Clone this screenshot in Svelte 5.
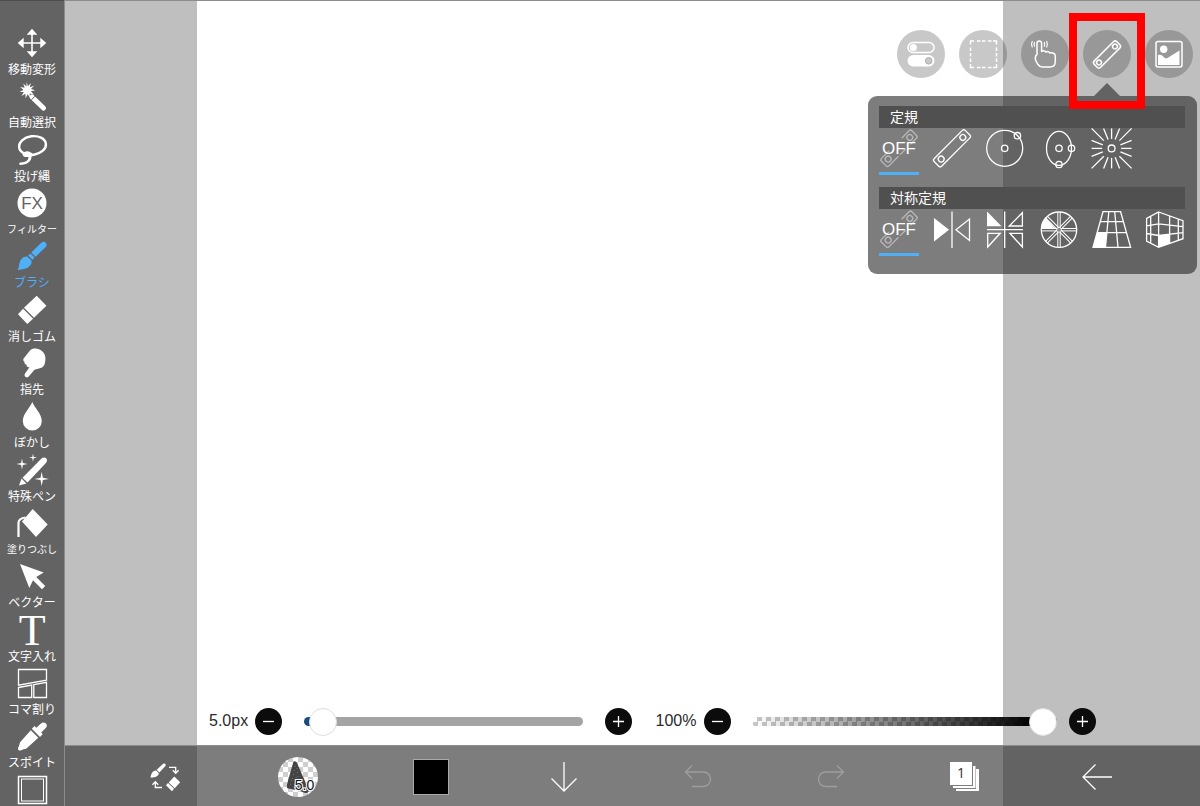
<script>
  const tools = [
    { id: 'move', label: '移動変形' },
    { id: 'wand', label: '自動選択' },
    { id: 'lasso', label: '投げ縄' },
    { id: 'filter', label: 'フィルター' },
    { id: 'brush', label: 'ブラシ' },
    { id: 'eraser', label: '消しゴム' },
    { id: 'smudge', label: '指先' },
    { id: 'blur', label: 'ぼかし' },
    { id: 'special', label: '特殊ペン' },
    { id: 'fill', label: '塗りつぶし' },
    { id: 'vector', label: 'ベクター' },
    { id: 'text', label: '文字入れ' },
    { id: 'frame', label: 'コマ割り' },
    { id: 'dropper', label: 'スポイト' },
    { id: 'canvas', label: '' }
  ];

  const sections = [
    { title: '定規', items: ['off', 'ruler', 'circle', 'ellipse', 'radial'] },
    { title: '対称定規', items: ['off', 'mirror', 'quad', 'wheel', 'grid', 'cube'] }
  ];

  const topButtons = ['toggles', 'select', 'touch', 'ruler', 'image'];
  const bottomButtons = ['swap', 'preview', 'color', 'down', 'undo', 'redo', 'layers', 'back'];

  const ringPoints = [
    [0, -20], [8, -20], [20, -20], [20, -8], [20, 0], [20, 8], [20, 20], [8, 20],
    [0, 20], [-8, 20], [-20, 20], [-20, 8], [-20, 0], [-20, -8], [-20, -20], [-8, -20]
  ];
  const rays = ringPoints.map(([x, y]) => {
    const k = (x && Math.abs(x) === Math.abs(y) ? 11 : 9.5) / Math.hypot(x, y);
    return { x1: 19.6 + x * k, y1: 20.4 + y * k, x2: 19.6 + x, y2: 20.4 + y };
  });

  let tool = $state('brush');
  let picked = $state(['off', 'off']);
  let size = $state(2);
  let opacity = $state(100);
</script>

<div class="app">
  <div class="backdrop"><div class="paper"></div></div>

  <nav class="sidebar">
    {#each tools as t}
      <button class="tool" class:active={tool === t.id} aria-label={t.label || t.id} onclick={() => (tool = t.id)}>
        <svg viewBox="0 0 32 32" width="32" height="32" fill="currentColor">
          {#if t.id === 'move'}
            <path d="M16 1.700l5.300 6h-4.500v7.500h7.500v-4.500L30.300 16l-6 5.300v-4.500h-7.500v7.500h4.500L16 30.300l-5.300-6h4.500v-7.500H7.700v4.500L1.700 16l6-5.300v4.500h7.500V7.700h-4.500z" />
          {:else if t.id === 'wand'}
            <path d="M10.700 2l1.200 4.300 2.900-3.300-1 4.300 4.200-1.500-3 3.200 4.200 1.300-4.300.900 2.900 3.400-4.200-1.200.700 4.400-2.700-3.500-2 4-.2-4.500-3.900 2.100 2.300-3.800-4.400-.4 4.100-1.700-3.300-3 4.400.7-1.300-4.200 3.100 3z" />
            <path d="M16 17l11.500 11" stroke="currentColor" stroke-width="5" stroke-linecap="round" />
            <path d="M19 16.200l-3.500 3.500" stroke="#636363" stroke-width="1" />
          {:else if t.id === 'lasso'}
            <ellipse cx="16.500" cy="11.500" rx="13.500" ry="9.300" transform="rotate(-8 16.500 11.500)" fill="none" stroke="currentColor" stroke-width="2.400" />
            <path d="M6.500 20c1-2.500 5-3.400 7.500-2 2.500 1.500 3.500 2.600 5 4-2 0-3.300.2-4.500 1.500-1.500 0-2.500-.5-4-.5-2 0-4-.5-4-3z" />
            <path d="M13.500 20.500c2 4-1 9-9 9.200" fill="none" stroke="currentColor" stroke-width="2.600" stroke-linecap="round" />
          {:else if t.id === 'filter'}
            <circle cx="16" cy="16" r="14.500" />
            <text x="16" y="22" text-anchor="middle" class="fx">FX</text>
          {:else if t.id === 'brush'}
            <path d="M29.600 2.500c1.600 1.600 1.200 3.500-.3 5L19.500 16.700l-4.200-4.200 9.400-9.200c1.500-1.500 3.500-2.200 4.900-.8z" />
            <path d="M14.400 13.400l4.200 4.200-2.200 2.200-4.200-4.200zM11.300 16.500l4.200 4.200c.6 3-1.200 6-4.500 7.300-3 1.100-6 1.500-9.500 2 1.200-1.800 1.300-3.500 1.800-6 .8-4.500 3.700-8 8-7.500z" />
          {:else if t.id === 'eraser'}
            <path d="M20.700 1.700l9.700 10L18 23.800 8 13.800zM7.100 14.700l10 10-5.800 5.200L2 20.300z" />
          {:else if t.id === 'smudge'}
            <path d="M14 3.500c2-1.800 4-2.300 7-1.800 3.500.5 7 3.300 8 6.800.8 3 .3 6.500-.5 9-.8 2.300-3 3.700-5.500 4l-4.500 1.200-6 7c-1 1-2.600.8-3.400-.2-.8-1-.6-2.200.1-3.200l4.300-6c-2 .2-3.200-.8-3-2.500-1.500-.3-2.300-1.500-2-3-1.200-.6-1.600-2-.9-3.300z" />
          {:else if t.id === 'blur'}
            <path d="M16.300 2c2 5.500 9.500 12 9.500 19a9.500 9.500 0 0 1-19 0c0-7 7.500-13.500 9.500-19z" />
          {:else if t.id === 'special'}
            <path d="M25.500 4.600c1.500-1.400 3.300-1.600 4.600-.3 1.300 1.300 1.200 3.200-.2 4.600L11.500 28.500l-5-4.800zM5.500 24.600l5 4.800L3 31.500z" />
            <path d="M6 4.500l.9 4.600 4.600.9-4.600.9L6 15.500l-.9-4.600L.5 10l4.600-.9zM17-.5l.7 3.400 3.400.7-3.400.7-.7 3.400-.7-3.400-3.400-.7 3.400-.7zM25.700 17.700l1.200 6 6 1.200-6 1.200-1.200 6-1.200-6-6-1.200 6-1.200z" />
          {:else if t.id === 'fill'}
            <path d="M16.700 2l15 15.500L20 30 6 14.500z" />
            <path d="M9.500 10.500c-4 .5-7 1.500-7 5.500v14" fill="none" stroke="currentColor" stroke-width="2.200" />
          {:else if t.id === 'vector'}
            <path d="M4 4l23.700 8.500-7.500 4.500 9 9-3.200 3.200-9-9L13.300 28z" />
          {:else if t.id === 'text'}
            <text x="16.300" y="31" text-anchor="middle" class="serif">T</text>
          {:else if t.id === 'frame'}
            <g fill="none" stroke="currentColor" stroke-width="1.300">
              <path d="M2.500 2.500h28v10.700l-28 5zM2.500 20.500l13.200-2.500v12.500H2.500zM17.800 17.600l12.700-2.300v15.200H17.800z" />
            </g>
          {:else if t.id === 'dropper'}
            <path d="M25 3.500c1.700-1.500 3.700-1.500 5 0 1.200 1.400 1 3.200-.2 4.500l-4.600 4.500 1.500 1.700-2.700 2.700-8.200-8.200 2.700-2.700 1.800 1.700z" />
            <path d="M14.800 10.200l7.500 7.500L11 28c-1.500 1.200-3 .8-4.500 1.700-1.500 1-3.300 1-4 .2-.7-.8-.7-2 .3-3.500.8-1.500.5-3 1.700-4.700z" />
          {:else}
            <g fill="none" stroke="currentColor">
              <rect x="2.500" y="2.500" width="28" height="27" stroke-width="1.500" />
              <rect x="5.500" y="5" width="22" height="22" />
            </g>
          {/if}
        </svg>
        {#if t.label}<span class:small={t.label.length > 4}>{t.label}</span>{/if}
      </button>
    {/each}
  </nav>

  <main>
    <header class="top">
      {#each topButtons as b}
        <div class="slot">
          <button class="round" aria-label={b}>
            <svg viewBox="0 0 48 48" width="48" height="48" fill="none" stroke="#fff" stroke-width="1.500">
              {#if b === 'toggles'}
                <rect x="11" y="12.500" width="26" height="10" rx="5" />
                <circle cx="16.300" cy="17.500" r="3.600" fill="#fff" stroke="none" />
                <rect x="10.500" y="25" width="27" height="11.500" rx="5.700" fill="#fff" stroke="none" />
                <circle cx="31.700" cy="30.800" r="3.300" fill="#c8c8c8" stroke="#b0b0b0" stroke-width="1" />
              {:else if b === 'select'}
                <path d="M11.500 14.500v-3.500h3.500M34 11h3.500v3.500M37.500 34v3.500H34M15 37.500h-3.500V34M18 11h3.500M23 11h3.500M29 11h3.500M18 37.500h3.500M23 37.500h3.500M29 37.500h3.500M11.500 17.500v3.500M11.500 23v3.500M11.500 28.500V32M37.500 17.500v3.500M37.500 23v3.500M37.500 28.500V32" />
              {:else if b === 'touch'}
                <path stroke-linejoin="round" d="M16 24.500V13.200c0-3 4.600-3 4.600 0v8.300c1.500-1 3.300-.8 4.200.5 1.500-.8 3.300-.3 4 1 2.700-.8 5.500.5 5.500 3v5.500c0 3.500-2 5.500-5.300 5.500h-7.500c-2 0-3.500-1-4.500-2.500-1.500-2.200-2.700-3.800-2.700-5.800 0-2 .2-3.500 1.700-4.200z" />
                <path stroke-width="1.200" stroke-linecap="round" d="M11.200 11.500c-.8 1.500-.8 4 0 5.500M13.500 12.500c-.5 1-.5 2.700 0 3.700M25.700 11.500c.8 1.500.8 4 0 5.500M23.300 12.500c.5 1 .5 2.700 0 3.700" />
              {:else if b === 'ruler'}
                <g transform="rotate(-45 24 24.500)">
                  <rect x="8" y="20" width="32" height="9" rx="2.500" />
                  <circle cx="12.700" cy="24.500" r="2.400" />
                  <circle cx="35.300" cy="24.500" r="2.400" />
                </g>
              {:else}
                <rect x="11" y="11.500" width="26" height="25.500" rx="2" />
                <path fill="#fff" stroke="none" d="M13 25c2.500-.8 4 0 5.500 1.700 1.200 1.600 2.300 2 4 1.200l12-7.500V35H13z" />
                <circle cx="18.700" cy="19.200" r="3.700" fill="#fff" stroke="none" />
              {/if}
            </svg>
          </button>
          {#if b === 'ruler'}
            <i class="caret"></i>
            <i class="highlight"></i>
          {/if}
        </div>
      {/each}
    </header>

    <section class="panel">
      {#each sections as s, n}
        <div class="group">
          <h2>{s.title}</h2>
          <div class="choices">
            {#each s.items as item}
              <button class="choice" class:on={picked[n] === item} aria-label={item} onclick={() => (picked[n] = item)}>
                <svg viewBox="0 0 40 40" width="40" height="40" fill="none" stroke="#fff" stroke-width="1.300">
                  {#if item === 'off'}
                    <g class="dim" transform="rotate(-45 20 20.300)">
                      <path d="M11 15H.5a2 2 0 0 0-2 2v6.600a2 2 0 0 0 2 2H14M16 25.600h8M29 15h10.500a2 2 0 0 1 2 2v6.600a2 2 0 0 1-2 2H31" />
                      <circle cx="4.700" cy="20.300" r="2.900" />
                      <circle cx="35.300" cy="20.300" r="2.900" />
                    </g>
                  {:else if item === 'ruler'}
                    <g transform="rotate(-45 20 20.300)">
                      <rect x="-2" y="15" width="44" height="10.600" rx="2" />
                      <circle cx="4.700" cy="20.300" r="2.900" />
                      <circle cx="35.300" cy="20.300" r="2.900" />
                    </g>
                  {:else if item === 'circle'}
                    <circle cx="19.700" cy="20.300" r="18" />
                    <circle cx="19.700" cy="20.300" r="3.200" />
                    <circle cx="32.400" cy="7.700" r="3.200" />
                  {:else if item === 'ellipse'}
                    <ellipse cx="20" cy="20.300" rx="12.500" ry="17" />
                    <circle cx="20" cy="20.300" r="3.200" />
                    <circle cx="32.500" cy="20.300" r="3.200" />
                    <circle cx="20" cy="36.500" r="3.200" />
                  {:else if item === 'radial'}
                    <circle cx="19.600" cy="20.400" r="3.400" />
                    {#each rays as r}<line {...r} />{/each}
                  {:else if item === 'mirror'}
                    <path fill="#fff" stroke="none" d="M2 9l15 11.700L2 32.500z" />
                    <path d="M20 2.500v36.500M37.500 10v21.500L24 20.700z" />
                  {:else if item === 'quad'}
                    <path fill="#fff" stroke="none" d="M2 2.500l14.500 14.800H2z" />
                    <path d="M37.400 3.700V17H24.200zM2.700 24.300h12.500L2.700 38zM37.400 24.300H24.900L37.400 38zM19.700 2.500V39M2 20.700h36" />
                  {:else if item === 'wheel'}
                    <g transform="translate(20 20.700)">
                      <circle r="17.700" />
                      {#each [0, 45, 90, 135] as a}
                        <path transform="rotate({a})" stroke-width="1" d="M-17.500-1.200h35M-17.500 1.200h35" />
                      {/each}
                      <path fill="#fff" stroke="none" d="M-4-1.500H-18c.3-4.500 2-8 4.500-11z" />
                      <circle r="2" fill="#888" stroke="none" />
                    </g>
                  {:else if item === 'grid'}
                    <path d="M11 2.700h17.600l10 35.600H1zM8.200 12.700h23.200M5 23.700h29.500M16.800 2.700l-3.300 35.600M22.700 2.700L26 38.300" />
                    <path fill="#fff" stroke="none" d="M5 23.700h9.900l-1.400 14.600H1z" />
                  {:else}
                    <path d="M13.600 3L38 11.700v18L13.600 38.300l-12-6.300V9.300zM13.600 3v35.300M1.600 16.900l12-2.100L38 17.700M1.600 24.500l12 2L38 23.700M5.700 7.300v26.800M24.600 7v27.500M33.300 10v21.500" />
                    <path fill="#fff" stroke="none" d="M13.600 26.500l11-1.300v9.300l-11 3.800z" />
                  {/if}
                </svg>
                {#if item === 'off'}<span>OFF</span>{/if}
              </button>
            {/each}
          </div>
        </div>
      {/each}
    </section>

    <div class="sliders">
      <label for="size">5.0px</label>
      <button class="step" aria-label="size minus"><svg viewBox="0 0 27 27" width="27" height="27"><path d="M8 13.500h11" /></svg></button>
      <input id="size" class="size" type="range" min="0" max="100" bind:value={size} />
      <button class="step" aria-label="size plus"><svg viewBox="0 0 27 27" width="27" height="27"><path d="M8 13.500h11M13.500 8v11" /></svg></button>
      <label for="opacity" class="second">100%</label>
      <button class="step" aria-label="opacity minus"><svg viewBox="0 0 27 27" width="27" height="27"><path d="M8 13.500h11" /></svg></button>
      <input id="opacity" class="opacity" type="range" min="0" max="100" bind:value={opacity} />
      <button class="step" aria-label="opacity plus"><svg viewBox="0 0 27 27" width="27" height="27"><path d="M8 13.500h11M13.500 8v11" /></svg></button>
    </div>

    <footer>
      {#each bottomButtons as b}
        <button class="action" class:faded={b === 'undo' || b === 'redo'} aria-label={b}>
          {#if b === 'color'}
            <i class="swatch"></i>
          {:else if b === 'preview'}
            <svg viewBox="0 0 40 40" width="40" height="40">
              <defs>
                <pattern id="checks" width="10" height="10" patternUnits="userSpaceOnUse">
                  <path fill="#fff" d="M0 0h10v10H0z" />
                  <path fill="#cfcfcf" d="M0 0h5v5H0zM5 5h5v5H5z" />
                </pattern>
              </defs>
              <circle cx="20" cy="20" r="20" fill="url(#checks)" />
              <path fill="#444" d="M15.500 4.500c1.500-.7 3 0 3.700 2l7.500 17c1.500 4 3 8 4 11.500-2.500 1.500-5 1-7-.5-3-1.500-6-1-8.500-2-2.500-.7-5-.8-6-1.500-1-2 .5-5 1-8z" />
              <path stroke="#777" stroke-width="1" stroke-dasharray="1 3" fill="none" d="M17 9l-3 16M19 11l2 18M15 17l10 11M12 27l13 3M13 23l9 2" />
              <text x="26.500" y="33" text-anchor="middle" class="stamp">5.0</text>
            </svg>
          {:else}
            <svg viewBox="0 0 32 32" width="32" height="32" fill="none" stroke="#fff" stroke-width="1.300">
              {#if b === 'swap'}
                <path fill="#fff" stroke="none" d="M14.200 2.700c1.700-1 3.200.5 2.200 2.200l-6 6.500-2.700-2.600zM7.200 9.600l2.600 2.600c.2 3-4.300 4.500-8.300 4.300.7-3.300 2-7.200 5.700-6.900zM25.300 15.500l5.900 5.700-5.500 6-6-5.800zM19 22l6 5.800-2 2.400-6-6z" />
                <path d="M20 6.300h6.700v5.500M23.800 9.200l2.900 3 2.900-3M13 26.500H6.300V21M3.400 23.800l2.900-3 2.900 3" />
              {:else if b === 'down'}
                <path d="M16 1v29M3.500 17.500L16 30l12.500-12.500" />
              {:else if b === 'undo'}
                <path d="M10 4.500L3.500 11l6.500 6.500M3.500 11H21c10 0 10 14.500 0 14.500H10" />
              {:else if b === 'redo'}
                <path d="M22 4.500l6.500 6.500-6.500 6.500M28.500 11H11c-10 0-10 14.500 0 14.500h11" />
              {:else if b === 'layers'}
                <path fill="#fff" stroke="none" d="M2 1h22v23H2zM25 5h2.500v22H5v-2h20zM28 8h3v22H8v-2h20z" />
                <text x="13" y="17" text-anchor="middle" class="count">1</text>
              {:else}
                <path d="M31 16H2M14.500 3.500L2 16l12.500 12.500" />
              {/if}
            </svg>
          {/if}
        </button>
      {/each}
    </footer>
  </main>
</div>

<style>
  :global(body) {
    margin: 0;
    background: #bfbfbf;
  }
  .app {
    --veil: rgba(36, 36, 36, 0.594);
    position: relative;
    display: grid;
    grid-template-columns: 65px minmax(0, 1fr);
    height: 100vh;
    overflow: hidden;
    font-family: 'Liberation Sans', 'Noto Sans CJK JP', sans-serif;
    isolation: isolate;
  }
  .backdrop {
    position: absolute;
    inset: 0;
    z-index: -1;
    display: flex;
    justify-content: center;
    background: #bfbfbf;
    box-shadow: inset 0 1px #8c8c8c;
  }
  .paper {
    height: 100%;
    aspect-ratio: 1;
    background: #fff;
    box-shadow: inset 0 1px #8c8c8c;
  }
  button {
    margin: 0;
    padding: 0;
    border: 0;
    background: none;
    color: #fff;
    font: inherit;
    cursor: pointer;
  }
  svg {
    display: block;
    flex: none;
    overflow: visible;
  }
  .sidebar {
    display: flex;
    flex-direction: column;
    justify-content: space-between;
    min-height: 0;
    padding-top: 27px;
    background: var(--veil);
    font-family: 'Noto Sans CJK JP', sans-serif;
    font-size: 12px;
    line-height: 20px;
    box-shadow: inset -1px 0 #8c8c8c;
  }
  .tool {
    display: flex;
    flex-direction: column;
    align-items: center;
    padding-right: 1px;
    white-space: nowrap;
  }
  .tool.active {
    color: #4fb0f8;
  }
  .tool .small {
    font-size: 10px;
  }
  .fx {
    font: 17px 'Liberation Sans', sans-serif;
    fill: #636363;
  }
  .serif {
    font: 44px/30px 'Liberation Serif', serif;
  }
  main {
    display: flex;
    flex-direction: column;
    min-height: 0;
  }
  .top {
    display: flex;
    justify-content: flex-end;
    gap: 14px;
    padding: 30px 7px 0 0;
  }
  .slot {
    position: relative;
  }
  .round {
    display: block;
    border-radius: 50%;
    background: rgba(36, 36, 36, 0.25);
  }
  .caret {
    position: absolute;
    left: 11px;
    top: 53px;
    border: 13px solid transparent;
    border-top: 0;
    border-bottom-color: #636363;
  }
  .highlight {
    position: absolute;
    z-index: 2;
    left: -14px;
    top: -17px;
    width: 60px;
    height: 80px;
    border: 8px solid #f00;
    pointer-events: none;
  }
  .panel {
    align-self: flex-end;
    display: flex;
    flex-direction: column;
    gap: 12px;
    width: 329px;
    box-sizing: border-box;
    margin: 18px 3px auto 0;
    padding: 10px 12px 18px 11px;
    border-radius: 9px;
    background: var(--veil);
  }
  h2 {
    margin: 0;
    padding: 0 0 2px 11px;
    background: #505050;
    color: #fff;
    font: 14px/20px 'Noto Sans CJK JP', sans-serif;
  }
  .choices {
    display: grid;
    grid-template-columns: repeat(6, 40px);
    justify-content: space-between;
  }
  .choice {
    display: grid;
    padding-bottom: 4px;
    border-bottom: 3px solid transparent;
  }
  .choice.on {
    border-color: #4fb0f8;
  }
  .choice > * {
    grid-area: 1 / 1;
  }
  .choice span {
    place-self: center;
    padding-top: 2px;
    font-size: 17px;
  }
  .dim {
    opacity: 0.45;
  }
  .sliders {
    display: grid;
    grid-template-columns: 46px 27px 323fr 27px 72px 27px 339fr 27px;
    align-items: center;
    padding: 0 104px 10px 144px;
    color: #2a2a2a;
    font-size: 16px;
    line-height: 28px;
    white-space: nowrap;
  }
  .step {
    width: 27px;
    height: 27px;
    border-radius: 50%;
    background: #0c0c0c;
  }
  .step path {
    stroke: #fff;
    stroke-width: 1.3;
  }
  .second {
    margin-left: 24px;
  }
  .sliders input {
    appearance: none;
    width: auto;
    min-width: 0;
    height: 28px;
    margin: 0 22px;
    background: none;
  }
  .sliders .opacity {
    margin-right: 12px;
  }
  .size::-webkit-slider-runnable-track {
    height: 9px;
    border-radius: 5px;
    background: linear-gradient(90deg, #1d4a7c 0 10px, #a4a4a4 10px);
  }
  .opacity::-webkit-slider-runnable-track {
    height: 9px;
    border-radius: 5px 14px 14px 5px;
    background:
      linear-gradient(90deg, transparent, #000 92%),
      repeating-conic-gradient(#c8c8c8 0 25%, #fff 0 50%) 0 0 / 9px 9px;
  }
  .sliders input::-webkit-slider-thumb {
    appearance: none;
    width: 28px;
    height: 28px;
    margin-top: -9px;
    border: 1px solid #ddd;
    border-radius: 50%;
    background: #fff;
    box-sizing: border-box;
  }
  footer {
    display: grid;
    grid-template-columns: repeat(8, 1fr);
    height: 61px;
    box-sizing: border-box;
    padding: 1px 36px 0 33px;
    border-top: 1px solid #8c8c8c;
    background: var(--veil);
  }
  .action {
    display: flex;
    justify-content: center;
    align-items: center;
  }
  .faded {
    opacity: 0.25;
  }
  .swatch {
    width: 34px;
    height: 34px;
    border: 1px solid #aaa;
    background: #000;
  }
  .stamp {
    font: 14px 'Liberation Sans', sans-serif;
    fill: #111;
    stroke: #fff;
    stroke-width: 2px;
    paint-order: stroke;
  }
  .count {
    font: 14px 'Open Sans', sans-serif;
    fill: #333;
    stroke: none;
  }
</style>
